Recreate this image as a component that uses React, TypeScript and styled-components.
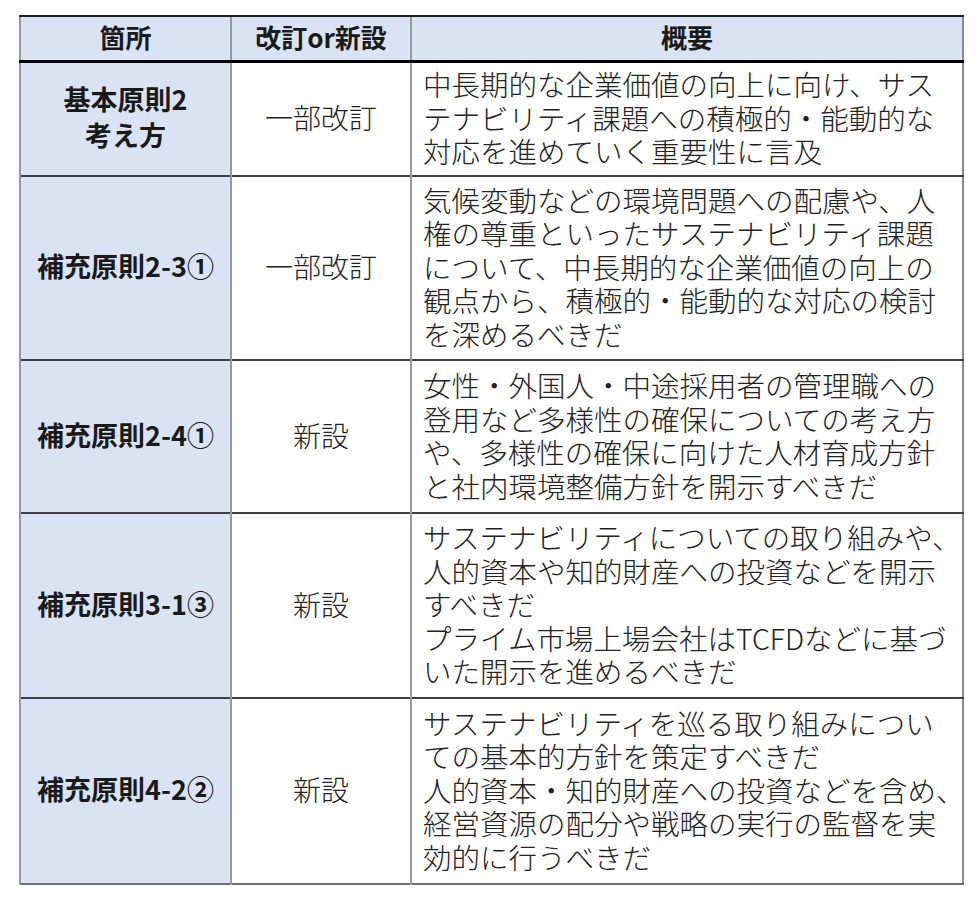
import React from "react";
import styled, { createGlobalStyle } from "styled-components";

const GlobalStyle = createGlobalStyle`
  html, body { margin: 0; padding: 0; background: #ffffff; }
  body { font-family: "Noto Sans CJK JP", "Noto Sans", sans-serif; color: #1a1a1a; }
`;

const Page = styled.div`
  padding: 15px 0 0 19px;
`;

const Table = styled.table`
  border-collapse: collapse;
  table-layout: fixed;
  width: 943px;
  border-left: 2px solid #8c8c8c;
  border-right: 2px solid #8c8c8c;
  border-bottom: 2px solid #6e6e6e;
`;

const Row = styled.tr<{ $h: number }>`
  height: ${(p) => p.$h}px;
`;

const HeadCell = styled.th`
  background: #dae3f3;
  border-top: 2px solid #222;
  border-bottom: 3px solid #000;
  border-left: 2px solid #9a9a9a;
  font-size: 26px;
  font-weight: 700;
  line-height: 1;
  padding: 0 0 3px 0;
  text-align: center;
  vertical-align: middle;
  white-space: nowrap;
`;

const LabelCell = styled.td`
  background: #dae3f3;
  border-top: 2px solid #3d4048;
  border-left: 2px solid #9a9a9a;
  font-size: 27px;
  font-weight: 700;
  line-height: 36px;
  text-align: center;
  vertical-align: middle;
  white-space: nowrap;
  padding: 0 0 4px 0;
`;

const TypeCell = styled.td`
  border-top: 2px solid #3d4048;
  border-left: 2px solid #9a9a9a;
  font-size: 28px;
  font-weight: 300;
  text-align: center;
  vertical-align: middle;
  white-space: nowrap;
  padding: 0 0 4px 0;
  color: #222;
`;

const DescCell = styled.td`
  border-top: 2px solid #3d4048;
  border-left: 2px solid #9a9a9a;
  font-size: 28.5px;
  font-weight: 300;
  line-height: 33.5px;
  text-align: left;
  vertical-align: middle;
  white-space: nowrap;
  padding: 0 0 3px 11px;
  color: #222;
`;

const Line = styled.div`
  display: block;
`;

type Item = {
  label: string[];
  type: string;
  lines: string[];
  h: number;
};

const items: Item[] = [
  {
    label: ["基本原則2", "考え方"],
    type: "一部改訂",
    lines: [
      "中長期的な企業価値の向上に向け、サス",
      "テナビリティ課題への積極的・能動的な",
      "対応を進めていく重要性に言及",
    ],
    h: 115,
  },
  {
    label: ["補充原則2-3①"],
    type: "一部改訂",
    lines: [
      "気候変動などの環境問題への配慮や、人",
      "権の尊重といったサステナビリティ課題",
      "について、中長期的な企業価値の向上の",
      "観点から、積極的・能動的な対応の検討",
      "を深めるべきだ",
    ],
    h: 184,
  },
  {
    label: ["補充原則2-4①"],
    type: "新設",
    lines: [
      "女性・外国人・中途採用者の管理職への",
      "登用など多様性の確保についての考え方",
      "や、多様性の確保に向けた人材育成方針",
      "と社内環境整備方針を開示すべきだ",
    ],
    h: 153,
  },
  {
    label: ["補充原則3-1③"],
    type: "新設",
    lines: [
      "サステナビリティについての取り組みや、",
      "人的資本や知的財産への投資などを開示",
      "すべきだ",
      "プライム市場上場会社はTCFDなどに基づ",
      "いた開示を進めるべきだ",
    ],
    h: 185,
  },
  {
    label: ["補充原則4-2②"],
    type: "新設",
    lines: [
      "サステナビリティを巡る取り組みについ",
      "ての基本的方針を策定すべきだ",
      "人的資本・知的財産への投資などを含め、",
      "経営資源の配分や戦略の実行の監督を実",
      "効的に行うべきだ",
    ],
    h: 186,
  },
];

export default function App() {
  return (
    <>
      <GlobalStyle />
      <Page>
        <Table>
          <colgroup>
            <col style={{ width: 211 }} />
            <col style={{ width: 180 }} />
            <col style={{ width: 552 }} />
          </colgroup>
          <thead>
            <Row $h={45}>
              <HeadCell>箇所</HeadCell>
              <HeadCell>改訂or新設</HeadCell>
              <HeadCell>概要</HeadCell>
            </Row>
          </thead>
          <tbody>
            {items.map((it, i) => (
              <Row $h={it.h} key={i}>
                <LabelCell>
                  {it.label.map((l, j) => (
                    <Line key={j}>{l}</Line>
                  ))}
                </LabelCell>
                <TypeCell>{it.type}</TypeCell>
                <DescCell>
                  {it.lines.map((l, j) => (
                    <Line key={j}>{l}</Line>
                  ))}
                </DescCell>
              </Row>
            ))}
          </tbody>
        </Table>
      </Page>
    </>
  );
}
